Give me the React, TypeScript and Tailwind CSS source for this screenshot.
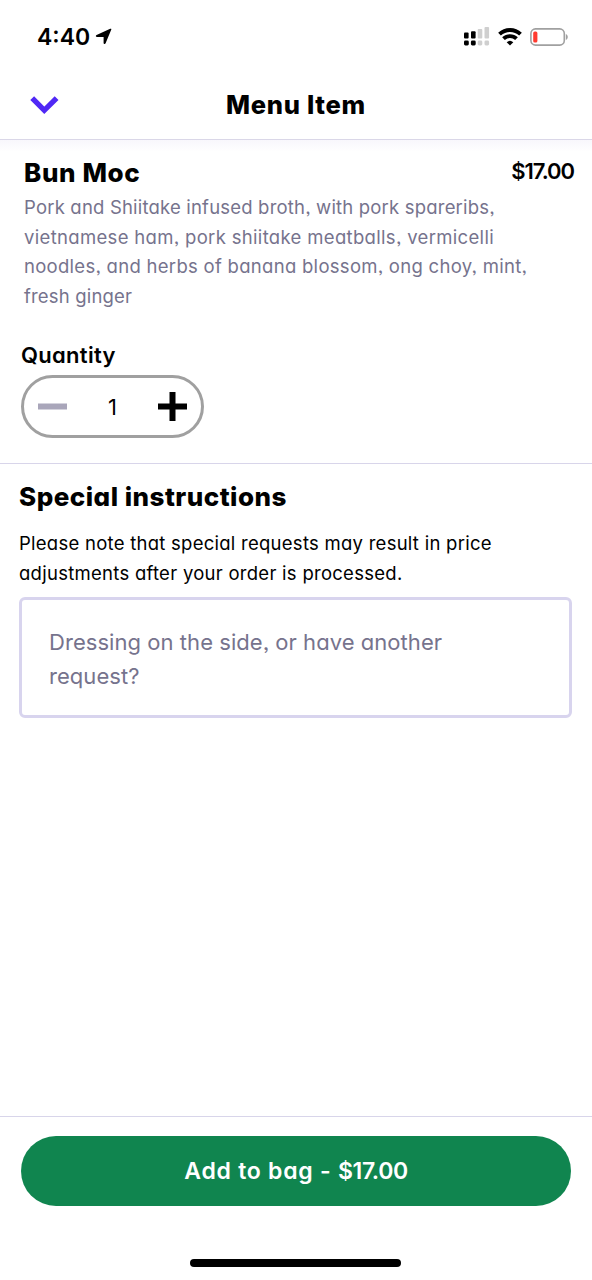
import React, { useState } from 'react';

const ITEM = {
  name: 'Bun Moc',
  price: 17,
};

function StatusBar() {
  return (
    <div className="flex h-[73px] items-center justify-between pl-[37px] pr-[24px]">
      <div className="flex items-center gap-[5px]">
        <span className="text-[23px] font-semibold leading-7">4:40</span>
        <svg width="17" height="17" viewBox="0 0 17 17">
          <path
            d="M16.3 1.6 10.6 15.3c-.4 1-2 .8-2-.4V9H2.2C.6 9 .4 7.4 1.6 6.9L15.2.8c.8-.4 1.4.1 1.1.8Z"
            fill="#000"
          />
        </svg>
      </div>
      <div className="flex items-center gap-[8px]">
        <svg width="26" height="19" viewBox="0 0 26 19">
          <g fill="#000">
            <rect x="0" y="5.5" width="4.6" height="6" rx="1" />
            <rect x="7" y="4.2" width="4.6" height="7.3" rx="1" />
            <rect x="0" y="13.5" width="4.8" height="5" rx="1.4" />
            <rect x="6.9" y="13.5" width="4.8" height="5" rx="1.4" />
          </g>
          <g fill="#cfcfcf">
            <rect x="13.7" y="2" width="4.6" height="9.5" rx="1" />
            <rect x="20.5" y="0" width="4.6" height="11.5" rx="1" />
            <rect x="13.7" y="13.5" width="4.6" height="5" rx="1.4" />
            <rect x="20.5" y="13.5" width="4.6" height="5" rx="1.4" />
          </g>
        </svg>
        <svg width="24" height="18" viewBox="0 0 24 18">
          <g fill="none" stroke="#000" strokeWidth="3.9">
            <path d="M1.5 6.2a15.2 15.2 0 0 1 21 0" />
            <path d="M5.5 10.7a9.4 9.4 0 0 1 13 0" />
          </g>
          <path d="M8.7 14.2a4.8 4.8 0 0 1 6.6 0L12 17.6Z" fill="#000" />
        </svg>
        <svg width="38" height="18" viewBox="0 0 38 18">
          <rect x=".9" y=".9" width="33.4" height="16.2" rx="4.6" fill="none" stroke="#a0a0a0" strokeWidth="1.6" />
          <rect x="3.2" y="3.4" width="4.2" height="11.2" rx="1.6" fill="#ff3b30" />
          <path d="M35.8 6c2.6 1 2.6 5 0 6Z" fill="#a0a0a0" />
        </svg>
      </div>
    </div>
  );
}

export default function App() {
  const [quantity, setQuantity] = useState(1);
  const total = `$${(ITEM.price * quantity).toFixed(2)}`;

  return (
    <div className="flex h-[1280px] w-[592px] flex-col overflow-hidden bg-white font-['Inter',sans-serif] text-black [font-feature-settings:'cv11','ss03']">
      <header className="h-[140px] shrink-0 border-b border-[#dad7e8]">
        <StatusBar />
        <div className="grid h-[65px] grid-cols-[1fr_auto_1fr] items-center">
          <button type="button" aria-label="Close" className="ml-[30px] w-[29px] cursor-pointer">
            <svg width="29" height="19" viewBox="0 0 29 19">
              <path d="m2.2 2.2 12.1 12.1L26.6 2.2" fill="none" stroke="#5028f5" strokeWidth="5.4" />
            </svg>
          </button>
          <h1 className="pb-[2px] text-[25.5px] font-extrabold leading-8 tracking-[0.72px]">Menu Item</h1>
        </div>
      </header>

      <section className="h-[324px] shrink-0 border-b border-[#d8d5ea] bg-[linear-gradient(#f8f7fc,#ffffff_12px)]">
        <div className="flex justify-between pl-6 pr-[18px] pt-4">
          <h2 className="pt-px text-[26px] font-extrabold leading-8 tracking-[0.6px]">{ITEM.name}</h2>
          <span className="text-[22px] font-semibold leading-[30px] tracking-[-1.05px]">$17.00</span>
        </div>
        <p className="mt-1 pl-6 text-[18.5px] leading-[29.6px] whitespace-nowrap text-[#76738d]">
          <span className="block tracking-[0.19px]">Pork and Shiitake infused broth, with pork spareribs,</span>
          <span className="block tracking-[0.33px]">vietnamese ham, pork shiitake meatballs, vermicelli</span>
          <span className="block tracking-[0.29px]">noodles, and herbs of banana blossom, ong choy, mint,</span>
          <span className="block tracking-[0.17px]">fresh ginger</span>
        </p>
        <div className="mt-[29px] pl-[21px]">
          <h3 className="text-[22px] font-semibold leading-[30px] tracking-[0.3px]">Quantity</h3>
          <div className="mt-[5px] flex h-[63px] w-[183px] items-center justify-between rounded-full border-[3px] border-[#a0a0a0] px-[14px]">
            <button type="button" aria-label="Decrease" onClick={() => setQuantity(Math.max(1, quantity - 1))}>
              <svg width="29" height="29" viewBox="0 0 29 29">
                <path d="M0 14.5h29" stroke="#a9a6ba" strokeWidth="6" />
              </svg>
            </button>
            <span className="text-[22px] leading-7">{quantity}</span>
            <button type="button" aria-label="Increase" onClick={() => setQuantity(quantity + 1)}>
              <svg width="29" height="29" viewBox="0 0 29 29">
                <path d="M0 14.5h29M14.5 0v29" stroke="#000" strokeWidth="6" />
              </svg>
            </button>
          </div>
        </div>
      </section>

      <section className="flex-1 px-[19px] pt-[17px]">
        <h2 className="text-[26px] font-extrabold leading-8 tracking-[0.48px]">Special instructions</h2>
        <p className="mt-4 text-[18.5px] leading-[29.5px] whitespace-nowrap">
          <span className="block tracking-[0.26px]">Please note that special requests may result in price</span>
          <span className="block tracking-[0.27px]">adjustments after your order is processed.</span>
        </p>
        <div className="mt-[9px] h-[121px] w-[553px] rounded-[6px] border-[3px] border-[#d8d4ee] pl-[27px] pt-[25px] text-[22px] leading-[34px] tracking-[0.05px] whitespace-nowrap text-[#76738d]">
          <span className="block">Dressing on the side, or have another</span>
          <span className="block">request?</span>
        </div>
      </section>

      <footer className="flex h-[164px] shrink-0 flex-col items-center border-t border-[#d8d5ea] pt-[19px]">
        <button
          type="button"
          className="h-[70px] w-[550px] cursor-pointer rounded-full bg-[#10854f] text-[23px] font-semibold leading-[30px] text-white"
        >
          <span className="tracking-[0.75px]">Add to bag - </span>
          <span className="tracking-[-0.4px]">{total}</span>
        </button>
        <div className="mt-[53px] mr-px h-2 w-[211px] rounded-full bg-black" />
      </footer>
    </div>
  );
}
